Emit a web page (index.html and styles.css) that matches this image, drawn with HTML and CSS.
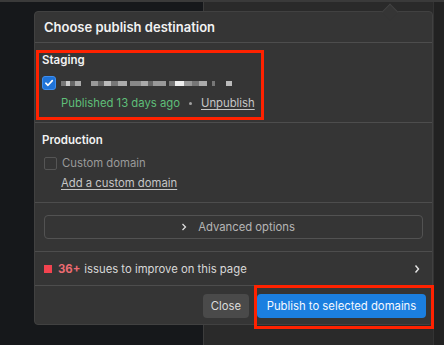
FILE: index.html
```html
<!DOCTYPE html>
<html lang="en">
<head>
    <meta charset="UTF-8">
    <title>Choose publish destination</title>
    <link rel="stylesheet" href="styles.css">
</head>
<body>

<div class="backdrop">
    <div class="canvas-area"></div>
    <div class="side-panel">
        <div class="side-rail"></div>
    </div>
</div>

<div class="popup">
    <div class="popup-arrow"></div>
    <div class="popup-header">Choose publish destination</div>

    <div class="section">
        <div class="section-title">Staging</div>
        <div class="check-row">
            <span class="checkbox checked">
                <svg width="10" height="10" viewBox="0 0 10 10"><path d="M1.8 5.2 L4 7.3 L8.3 2.6" fill="none" stroke="#fff" stroke-width="1.6" stroke-linecap="round" stroke-linejoin="round"/></svg>
            </span>
            <span class="masked">
                <i class="m1"></i><i class="m2"></i><i class="m3"></i><i class="m4"></i><i class="m5"></i><i class="m6"></i>
            </span>
        </div>
        <div class="sub-row">
            <span class="published">Published 13 days ago</span>
            <span class="dot"></span>
            <a class="link">Unpublish</a>
        </div>
    </div>

    <div class="section">
        <div class="section-title">Production</div>
        <div class="check-row">
            <span class="checkbox"></span>
            <span class="muted">Custom domain</span>
        </div>
        <div class="sub-row">
            <a class="link">Add a custom domain</a>
        </div>
    </div>

    <div class="advanced">
        <button class="advanced-btn">
            <svg width="8" height="8" viewBox="0 0 8 8"><path d="M2.5 1 L5.5 4 L2.5 7" fill="none" stroke="#ddd" stroke-width="1.3"/></svg>
            Advanced options
        </button>
    </div>

    <div class="issues">
        <span class="issue-mark"></span>
        <span class="issue-count">36+</span>
        <span class="issue-text">issues to improve on this page</span>
        <svg class="issue-chevron" width="8" height="10" viewBox="0 0 8 10"><path d="M2.5 1.5 L5.5 5 L2.5 8.5" fill="none" stroke="#e6e6e6" stroke-width="1.4"/></svg>
    </div>

    <div class="popup-footer">
        <button class="btn btn-close">Close</button>
        <button class="btn btn-primary">Publish to selected domains</button>
    </div>
</div>

<!-- annotation boxes from the screenshot -->
<div class="mark mark-staging"></div>
<div class="mark mark-publish"></div>

</body>
</html>
```

FILE: styles.css
```css
body {
    margin: 0;
    width: 444px;
    height: 345px;
    overflow: hidden;
    background: #16181b;
    font-family: 'Inter', 'Noto Sans', sans-serif;
    font-size: 11.3px;
    color: #e6e6e6;
}

.backdrop {
    display: flex;
    height: 100%;
    border-top: 2px solid #3a3a3a;
    box-sizing: border-box;
}

.canvas-area {
    width: 203px;
    background: #16181b;
}

.side-panel {
    flex: 1;
    display: flex;
    justify-content: flex-end;
    background: #2a2a2a;
    border-left: 1px solid #3c3c3c;
}

.side-rail {
    width: 10px;
    background: #222;
    border-left: 1px solid #333;
}

.popup {
    position: absolute;
    left: 34px;
    top: 11px;
    width: 397px;
    height: 312px;
    background: #353535;
    border: 1px solid #414141;
    border-radius: 4px;
    display: flex;
    flex-direction: column;
}

.popup-arrow {
    position: absolute;
    top: -6px;
    left: 349px;
    width: 11px;
    height: 11px;
    background: #353535;
    border-top: 1px solid #414141;
    border-left: 1px solid #414141;
    transform: rotate(45deg);
}

.popup-header {
    position: relative;
    height: 30px;
    padding-left: 9px;
    display: flex;
    align-items: center;
    font-size: 13px;
    font-weight: 600;
    color: #f2f2f2;
    border-bottom: 1px solid #4d4d4d;
}

.section {
    height: 80px;
    padding: 10px 0 0 7px;
    box-sizing: border-box;
    border-bottom: 1px solid #4d4d4d;
}

.section-title {
    font-weight: 600;
    font-size: 11.5px;
    color: #f2f2f2;
    height: 15px;
    line-height: 15px;
}

.check-row {
    display: flex;
    align-items: center;
    gap: 5px;
    height: 20px;
    margin-top: 5px;
}

.checkbox {
    width: 11px;
    height: 11px;
    border: 1px solid #555;
    border-radius: 2px;
    margin-left: 2px;
    display: flex;
    align-items: center;
    justify-content: center;
}

.checkbox.checked {
    width: 12px;
    height: 12px;
    margin-left: 0;
    background: #1f73d8;
    border: 1.5px solid #3d8ef0;
    border-radius: 3px;
}

.masked {
    display: flex;
    align-items: center;
    gap: 3px;
    height: 6px;
}

.masked i {
    display: block;
    height: 5px;
}

.m1 { width: 20px; background: linear-gradient(90deg, #777 0 25%, #ccc 25% 45%, #666 45% 70%, #aaa 70%); }
.m2 { width: 36px; margin-left: 7px; background: linear-gradient(90deg, #999 0 20%, #666 20% 35%, #bbb 35% 55%, #777 55% 75%, #aaa 75%); }
.m3 { width: 36px; background: linear-gradient(90deg, #888 0 30%, #aaa 30% 50%, #666 50% 65%, #999 65%); }
.m4 { width: 38px; background: linear-gradient(90deg, #777 0 15%, #eee 15% 40%, #999 40% 60%, #777 60% 80%, #aaa 80%); }
.m5 { width: 3px; margin-left: 2px; background: #777; }
.m6 { width: 6px; margin-left: 8px; background: #bbb; }

.sub-row {
    display: flex;
    align-items: center;
    gap: 6px;
    height: 20px;
    padding-left: 19px;
}

.published {
    color: #5fbf79;
}

.dot {
    width: 3px;
    height: 3px;
    border-radius: 50%;
    background: #a0a0a0;
    margin: 1px 3px 0 3px;
}

.link {
    color: #c6c6c6;
    text-decoration: underline;
    text-underline-offset: 2px;
}

.muted {
    color: #9a9a9a;
}

.advanced {
    height: 49px;
    padding: 12px 9px 0 9px;
    box-sizing: border-box;
    border-bottom: 1px solid #4d4d4d;
}

.advanced-btn {
    width: 100%;
    height: 24px;
    background: transparent;
    border: 1px solid #525252;
    border-radius: 4px;
    color: #b5b5b5;
    font-family: inherit;
    font-size: 11.3px;
    display: flex;
    align-items: center;
    justify-content: center;
    gap: 10px;
    padding: 0 0 0 8px;
}

.issues {
    height: 33px;
    display: flex;
    align-items: center;
    padding: 0 11px 0 9px;
    border-bottom: 1px solid #4d4d4d;
}

.issue-mark {
    width: 8px;
    height: 8px;
    background: #f2434f;
    margin-right: 6px;
}

.issue-count {
    color: #eb6b72;
    font-weight: 700;
    margin-right: 4px;
}

.issue-text {
    flex: 1;
    color: #d8d8d8;
}

.popup-footer {
    flex: 1;
    display: flex;
    justify-content: flex-end;
    align-items: flex-start;
    gap: 8px;
    padding: 8px 6px 0 0;
}

.btn {
    height: 24px;
    border: none;
    border-radius: 4px;
    font-family: inherit;
    font-size: 11.3px;
    padding: 0;
    white-space: nowrap;
}

.btn-close {
    background: #4a4a4a;
    color: #dcdcdc;
    width: 46px;
}

.btn-primary {
    background: #1b7fe0;
    color: #f4f8ff;
    width: 169px;
}

.mark {
    position: absolute;
    border: 3px solid #ff2200;
    box-sizing: border-box;
}

.mark-staging {
    left: 36px;
    top: 50px;
    width: 228px;
    height: 70px;
}

.mark-publish {
    left: 254px;
    top: 285px;
    width: 180px;
    height: 44px;
}
```
